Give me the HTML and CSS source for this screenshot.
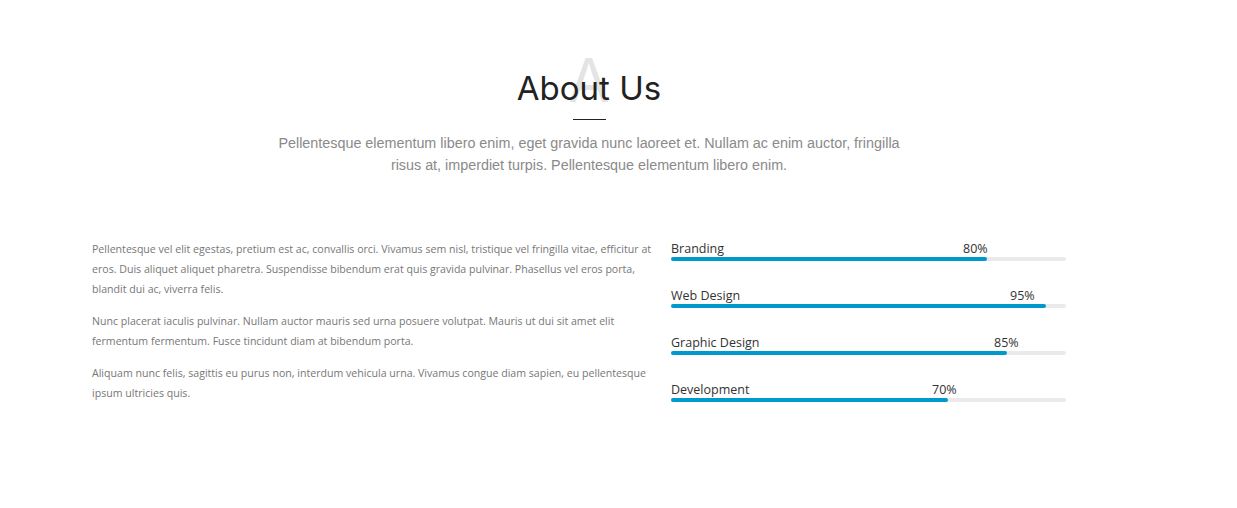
FILE: index.html
```html
<!DOCTYPE html>
<html>
<head>
<meta charset="utf-8">
<link rel="stylesheet" href="styles.css">
</head>
<body>
<section class="about">
  <header class="about-head">
    <div class="title-wrap">
      <span class="watermark">A</span>
      <h2 class="title">About Us</h2>
    </div>
    <div class="divider"></div>
    <p class="lead">Pellentesque elementum libero enim, eget gravida nunc laoreet et. Nullam ac enim auctor, fringilla risus at, imperdiet turpis. Pellentesque elementum libero enim.</p>
  </header>
  <div class="about-body">
    <div class="text-col">
      <p>Pellentesque vel elit egestas, pretium est ac, convallis orci. Vivamus sem nisl, tristique vel fringilla vitae, efficitur at eros. Duis aliquet aliquet pharetra. Suspendisse bibendum erat quis gravida pulvinar. Phasellus vel eros porta, blandit dui ac, viverra felis.</p>
      <p>Nunc placerat iaculis pulvinar. Nullam auctor mauris sed urna posuere volutpat. Mauris ut dui sit amet elit fermentum fermentum. Fusce tincidunt diam at bibendum porta.</p>
      <p>Aliquam nunc felis, sagittis eu purus non, interdum vehicula urna. Vivamus congue diam sapien, eu pellentesque ipsum ultricies quis.</p>
    </div>
    <div class="skills">
      <div class="skill">
        <div class="skill-label">Branding</div>
        <div class="track">
          <div class="fill" style="width:80%"></div>
          <span class="pct" style="left:292px">80%</span>
        </div>
      </div>
      <div class="skill">
        <div class="skill-label">Web Design</div>
        <div class="track">
          <div class="fill" style="width:95%"></div>
          <span class="pct" style="left:339px">95%</span>
        </div>
      </div>
      <div class="skill">
        <div class="skill-label">Graphic Design</div>
        <div class="track">
          <div class="fill" style="width:85%"></div>
          <span class="pct" style="left:323px">85%</span>
        </div>
      </div>
      <div class="skill">
        <div class="skill-label">Development</div>
        <div class="track">
          <div class="fill" style="width:70%"></div>
          <span class="pct" style="left:261px">70%</span>
        </div>
      </div>
    </div>
  </div>
</section>
</body>
</html>
```

FILE: styles.css
```css
html, body {
  margin: 0;
  padding: 0;
  background: #ffffff;
}

.about {
  width: 1178px;
  padding-top: 64px;
  box-sizing: border-box;
}

.about-head {
  display: flex;
  flex-direction: column;
  align-items: center;
}

.title-wrap {
  position: relative;
  display: flex;
  justify-content: center;
}

.watermark {
  position: absolute;
  left: 50%;
  top: -14px;
  transform: translateX(-50%);
  font-family: "Inter", "DejaVu Sans", sans-serif;
  font-size: 60px;
  font-weight: 400;
  line-height: 1;
  color: #e4e4e4;
  z-index: 0;
}

.title {
  position: relative;
  z-index: 1;
  margin: 0;
  font-family: "Inter", "DejaVu Sans", sans-serif;
  font-weight: 400;
  font-size: 33px;
  line-height: 48px;
  color: #222222;
}

.divider {
  width: 33px;
  height: 1px;
  background: #222222;
  margin-top: 7px;
}

.lead {
  margin: 12px 0 0;
  width: 640px;
  text-align: center;
  font-family: "Liberation Sans", Arial, sans-serif;
  font-size: 14.35px;
  line-height: 22px;
  color: #8a8a8a;
}

.about-body {
  display: grid;
  grid-template-columns: 560px 395px;
  column-gap: 19px;
  padding-left: 92px;
  margin-top: 60px;
}

.text-col {
  padding-top: 3px;
}

.text-col p {
  margin: 0 0 12px;
  font-family: "Open Sans", sans-serif;
  font-size: 10.6px;
  line-height: 20px;
  color: #777777;
}

.skills {
  display: flex;
  flex-direction: column;
  gap: 26px;
  padding-top: 4px;
}

.skill-label {
  font-family: "Open Sans", sans-serif;
  font-size: 12.5px;
  line-height: 17px;
  color: #333333;
}

.track {
  position: relative;
  height: 4px;
  background: #e9eaec;
  border-radius: 2px;
}

.fill {
  height: 4px;
  background: #0099cc;
  border-radius: 2px;
}

.pct {
  position: absolute;
  bottom: 4px;
  font-family: "Open Sans", sans-serif;
  font-size: 12.5px;
  line-height: 17px;
  color: #333333;
}
```
